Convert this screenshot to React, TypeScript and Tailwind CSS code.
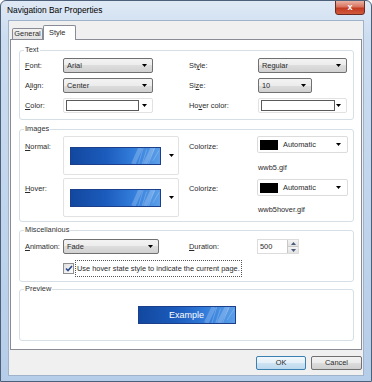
import React from "react";

// small black triangle used by combos
function Arrow() {
  return (
    <svg width="5" height="3" viewBox="0 0 5 3" className="block">
      <path d="M0 0H5L2.5 3Z" fill="#000" />
    </svg>
  );
}

function Combo({ text, w }: { text: string; w: string }) {
  return (
    <div
      className={`${w} h-[15px] flex items-center justify-between pl-[3px] pr-[5px] border border-[#707070] rounded-[2px] bg-[linear-gradient(#f3f3f3_0%,#ececec_50%,#dddddd_50%,#d1d1d1_100%)]`}
    >
      <span>{text}</span>
      <Arrow />
    </div>
  );
}

function ColorBox({ w, inner }: { w: string; inner: string }) {
  return (
    <div className={`${w} h-[15px] flex items-center justify-between pl-[2px] pr-[5px] border border-[#e2e2e2] rounded-[2px] bg-white`}>
      <div className={`${inner} h-[11px] border border-[#5a5a5a] bg-white`} />
      <Arrow />
    </div>
  );
}

function Swatch() {
  return (
    <div className="w-[91px] h-[17px] flex items-center pl-[2px] pr-[6px] border border-[#dcdcdc] rounded-[2px] bg-white">
      <div className="w-[18px] h-[10px] bg-black" />
      <span className="ml-[5px] flex-1">Automatic</span>
      <Arrow />
    </div>
  );
}

function Streaks() {
  return (
    <svg width="100%" height="100%" viewBox="0 0 100 20" preserveAspectRatio="none" className="absolute inset-0">
      <path d="M70 20L78 0M83 20L92 0" stroke="#dbe9ff" strokeOpacity="0.25" strokeWidth="5" fill="none" />
      <path d="M76 20L81 0M80 20L85 2M87 20L94 0M92 16L99 3" stroke="#ffffff" strokeOpacity="0.3" strokeWidth="0.8" fill="none" />
    </svg>
  );
}

function BlueBar({ w, h, children }: { w: string; h: string; children?: React.ReactNode }) {
  return (
    <div className={`${w} ${h} relative overflow-hidden flex items-center justify-center border border-[#1b3f8a] bg-[linear-gradient(90deg,#12489f_0%,#1c5cbd_40%,#3580dc_72%,#5c9fe8_100%)]`}>
      <Streaks />
      {children}
    </div>
  );
}

function ImageBox() {
  return (
    <div className="w-[116px] h-[39px] flex items-center pl-[6px] pr-[4px] border border-[#e2e2e2] rounded-[2px] bg-white">
      <BlueBar w="w-[91px]" h="h-[18px]" />
      <div className="ml-auto">
        <Arrow />
      </div>
    </div>
  );
}

function Group({ title, h, children }: { title: string; h: string; children: React.ReactNode }) {
  return (
    <div className={`relative ${h} w-[335px] ml-[8px] border border-[#d5dfe5] rounded-[3px] bg-white`}>
      <span className="absolute -top-[5px] left-[4px] px-[1px] bg-white text-[#333] leading-none">{title}</span>
      {children}
    </div>
  );
}

function U({ children }: { children: React.ReactNode }) {
  return <span className="underline underline-offset-[1px]">{children}</span>;
}

export default function App() {
  return (
    <div className="w-[372px] h-[382px] flex flex-col border border-[#4d6079] rounded-t-[6px] bg-[linear-gradient(180deg,#dfe9f5_0%,#cbdcf0_10%,#bfd4ec_60%,#b6cde9_100%)] font-['Liberation_Sans',Arial,sans-serif] text-[7.4px] text-[#2a2a2a] overflow-hidden">
      {/* title bar */}
      <div className="h-[19px] flex items-start shrink-0">
        <span className="ml-[6px] mt-[5px] text-[8.4px] leading-none text-black">Navigation Bar Properties</span>
        <div className="ml-auto mr-[6px] -mt-[1px] w-[30px] h-[15px] flex items-center justify-center rounded-b-[3px] border border-[#6b2a22] bg-[linear-gradient(180deg,#eab1a3_0%,#d8735e_45%,#c23b22_55%,#d25a3c_100%)]">
          <span className="text-white font-bold text-[9px] leading-none">x</span>
        </div>
      </div>

      {/* client area */}
      <div className="mx-[7px] h-[356px] flex flex-col border border-[#9fb3cb] bg-[#f0f0f0]">
        {/* tabs */}
        <div className="mt-[4px] h-[14px] flex items-end pl-[3px]">
          <div className="h-[11px] w-[31px] flex items-center justify-center border border-b-0 border-[#898c95] rounded-t-[2px] bg-[linear-gradient(#f2f2f2,#e3e3e3)]">
            General
          </div>
          <div className="h-[15px] w-[33px] -mb-[1px] relative z-10 flex items-center pl-[5px] border border-b-0 border-[#898c95] rounded-t-[2px] bg-white">
            Style
          </div>
        </div>

        {/* tab panel */}
        <div className="mx-[1px] h-[311px] flex flex-col border border-[#898c95] bg-white">
          {/* Text */}
          <div className="mt-[10px]">
            <Group title="Text" h="h-[70px]">
              <div className="pt-[7px] pl-[5px] flex flex-col gap-[5px]">
                <div className="flex items-center">
                  <span className="w-[38px]"><U>F</U>ont:</span>
                  <Combo text="Arial" w="w-[90px]" />
                  <span className="w-[36px]" />
                  <span className="w-[69px]">St<U>y</U>le:</span>
                  <Combo text="Regular" w="w-[89px]" />
                </div>
                <div className="flex items-center">
                  <span className="w-[38px]">A<U>l</U>ign:</span>
                  <Combo text="Center" w="w-[90px]" />
                  <span className="w-[36px]" />
                  <span className="w-[69px]">Si<U>z</U>e:</span>
                  <Combo text="10" w="w-[54px]" />
                </div>
                <div className="flex items-center">
                  <span className="w-[38px]"><U>C</U>olor:</span>
                  <ColorBox w="w-[90px]" inner="w-[73px]" />
                  <span className="w-[36px]" />
                  <span className="w-[69px]">Ho<U>v</U>er color:</span>
                  <ColorBox w="w-[89px]" inner="w-[74px]" />
                </div>
              </div>
            </Group>
          </div>

          {/* Images */}
          <div className="mt-[9px]">
            <Group title="Images" h="h-[93px]">
              <div className="pt-[6px] pl-[5px] flex flex-col gap-[3px]">
                <div className="flex items-start">
                  <span className="w-[38px] pt-[5px]"><U>N</U>ormal:</span>
                  <ImageBox />
                  <span className="w-[10px]" />
                  <span className="w-[68px] pt-[5px]">Colorize:</span>
                  <div className="flex flex-col">
                    <Swatch />
                    <span className="mt-[9px] ml-[1px]">wwb5.gif</span>
                  </div>
                </div>
                <div className="flex items-start">
                  <span className="w-[38px] pt-[5px]"><U>H</U>over:</span>
                  <ImageBox />
                  <span className="w-[10px]" />
                  <span className="w-[68px] pt-[5px]">Colorize:</span>
                  <div className="flex flex-col pt-[1px]">
                    <Swatch />
                    <span className="mt-[8px] ml-[1px]">wwb5hover.gif</span>
                  </div>
                </div>
              </div>
            </Group>
          </div>

          {/* Miscellanious */}
          <div className="mt-[8px]">
            <Group title="Miscellanious" h="h-[52px]">
              <div className="pt-[8px] pl-[5px] flex flex-col">
                <div className="flex items-center">
                  <span className="w-[38px]"><U>A</U>nimation:</span>
                  <Combo text="Fade" w="w-[96px]" />
                  <span className="w-[30px]" />
                  <span className="w-[68px]"><U>D</U>uration:</span>
                  <div className="w-[42px] h-[15px] flex border border-[#dcdcdc] bg-white">
                    <span className="flex-1 flex items-center pl-[2px]">500</span>
                    <div className="w-[11px] flex flex-col border-l border-[#c8c8c8]">
                      <div className="flex-1 flex items-center justify-center border-b border-[#c8c8c8] bg-[linear-gradient(#f4f4f4,#e2e2e2)]">
                        <svg width="5" height="3" viewBox="0 0 5 3"><path d="M0 3H5L2.5 0Z" fill="#4a5a7a" /></svg>
                      </div>
                      <div className="flex-1 flex items-center justify-center bg-[linear-gradient(#f4f4f4,#e2e2e2)]">
                        <svg width="5" height="3" viewBox="0 0 5 3"><path d="M0 0H5L2.5 3Z" fill="#4a5a7a" /></svg>
                      </div>
                    </div>
                  </div>
                </div>
                <div className="mt-[6px] ml-[38px] flex items-center">
                  <div className="w-[11px] h-[11px] flex items-center justify-center border border-[#8e8f8f] bg-[linear-gradient(135deg,#dedede,#ffffff)]">
                    <svg width="8" height="7" viewBox="0 0 8 7">
                      <path d="M1 3.5L3 5.5L7 1" stroke="#2c4a8a" strokeWidth="1.6" fill="none" />
                    </svg>
                  </div>
                  <span className="ml-[1px] px-[1px] py-[2px] border border-dotted border-[#555]">Use hover state style to indicate the current page.</span>
                </div>
              </div>
            </Group>
          </div>

          {/* Preview */}
          <div className="mt-[7px]">
            <Group title="Preview" h="h-[52px]">
              <div className="pt-[16px] flex justify-center">
                <BlueBar w="w-[98px]" h="h-[18px]">
                  <span className="relative text-white text-[9px] leading-none">Example</span>
                </BlueBar>
              </div>
            </Group>
          </div>
        </div>

        {/* buttons */}
        <div className="mt-[6px] flex justify-end gap-[5px] pr-[1px]">
          <div className="w-[50px] h-[14px] flex items-center justify-center border border-[#3c7fb1] rounded-[2px] bg-[linear-gradient(#f2f8fc_0%,#e3eff8_50%,#cfe4f3_50%,#bcd9ee_100%)]">
            OK
          </div>
          <div className="w-[51px] h-[14px] flex items-center justify-center border border-[#707070] rounded-[2px] bg-[linear-gradient(#f2f2f2_0%,#ebebeb_50%,#dddddd_50%,#cfcfcf_100%)]">
            Cancel
          </div>
        </div>
      </div>
    </div>
  );
}
